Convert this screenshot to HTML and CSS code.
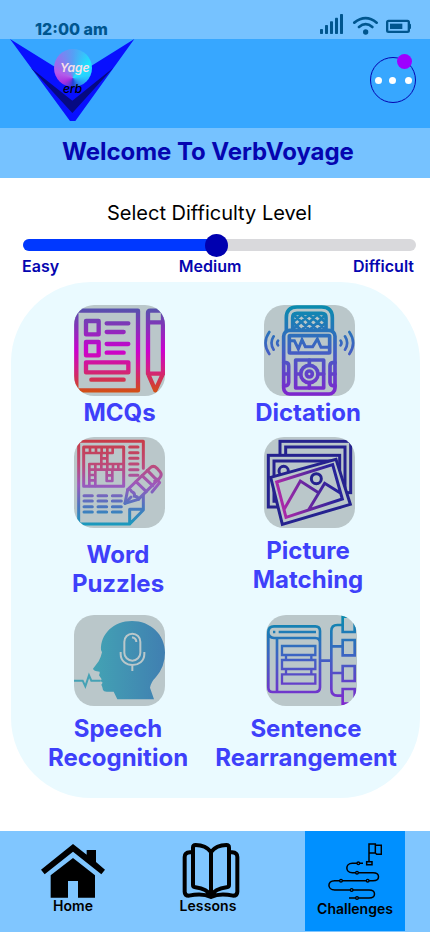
FILE: index.html
```html
<!DOCTYPE html>
<html lang="en">
<head>
<meta charset="utf-8">
<meta name="viewport" content="width=device-width, initial-scale=1">
<title>VerbVoyage</title>
<link rel="stylesheet" href="styles.css">
</head>
<body>
<div class="app">
  <div class="status">
    <span class="clock">12:00 am</span>
    <svg class="status-icons" width="92" height="22" viewBox="0 0 276 66">
      <g fill="#00568f">
        <rect x="0" y="45" width="9" height="15" rx="2"/><rect x="15" y="33" width="9" height="27" rx="2"/><rect x="30" y="22" width="9" height="38" rx="2"/><rect x="45" y="11" width="9" height="49" rx="2"/><rect x="60" y="0" width="9" height="60" rx="2"/>
        <circle cx="137" cy="54" r="8"/>
        <rect x="210" y="29" width="37" height="16"/>
        <path d="M265 29h5q3 0 3 3v10q0 3-3 3h-5z"/>
      </g>
      <g fill="none" stroke="#00568f" stroke-width="8" stroke-linecap="round">
        <path d="M103 26Q137-1 170 26M117 39Q137 22 157 39"/>
        <rect x="201.500" y="20.500" width="65" height="33" rx="4" stroke-width="7"/>
      </g>
    </svg>
  </div>
  <header class="header">
    <div class="logo">
      <svg width="125" height="83" viewBox="0 0 375 249">
        <path fill="#0810ff" d="M0 0L187 116L373 0L196 246H180Z"/>
        <path fill="#060a82" d="M62 86L187 185L310 86L187 222Z"/>
      </svg>
      <span class="orb"></span>
      <span class="logo-top">Yage</span>
      <span class="logo-bottom">erb</span>
    </div>
    <div class="more"><i></i><i></i><i></i><b></b></div>
  </header>
  <h1 class="welcome">Welcome To VerbVoyage</h1>

  <section class="level">
    <h2>Select Difficulty Level</h2>
    <div class="track"><div class="fill"></div><div class="knob"></div></div>
    <div class="labels"><span>Easy</span><span class="medium">Medium</span><span>Difficult</span></div>
  </section>

  <main class="panel">
    <div class="card">
      <svg class="tile" viewBox="0 0 273 273">
        <defs><linearGradient id="g1" gradientUnits="userSpaceOnUse" x1="0" y1="10" x2="0" y2="262"><stop offset="0" stop-color="#5552ac"/><stop offset=".25" stop-color="#8b2ebb"/><stop offset=".5" stop-color="#cb00cf"/><stop offset=".72" stop-color="#d41d87"/><stop offset=".88" stop-color="#d13746"/><stop offset="1" stop-color="#d35012"/></linearGradient></defs>
        <g fill="none" stroke="url(#g1)" stroke-width="13" stroke-linejoin="round" stroke-linecap="round">
          <path d="M7 17H192V256H7Z"/>
          <rect x="36" y="48" width="38" height="40"/><rect x="36" y="111" width="38" height="40"/>
          <path d="M98 55H163M98 81H149M98 117H163M98 143H149M52 224H149"/>
          <rect x="36" y="172" width="127" height="30"/>
          <path d="M229 17H260Q267 17 267 24V206L244 256L222 206V24Q222 17 229 17M222 52H267M222 206H267"/>
        </g>
      </svg>
      <h3 class="right">MCQs</h3>
    </div>
    <div class="card">
      <svg class="tile nudge1" viewBox="0 0 273 273">
        <defs><linearGradient id="g2" gradientUnits="userSpaceOnUse" x1="0" y1="0" x2="0" y2="273"><stop offset="0" stop-color="#088dae"/><stop offset=".5" stop-color="#4160c3"/><stop offset="1" stop-color="#8024cf"/></linearGradient></defs>
        <g fill="none" stroke="url(#g2)" stroke-width="11" stroke-linejoin="round" stroke-linecap="round">
          <path d="M67 76V38Q67 6 99 6H173Q205 6 205 38V76M86 74V38Q86 25 99 25H173Q186 25 186 38V74"/>
          <path stroke-width="8" d="M90 30L134 72M112 28L156 72M134 28L180 70M158 28L184 52M88 53L108 72M184 30L140 72M160 28L116 72M138 28L90 70M114 28L88 50M184 54L164 72"/>
          <rect x="59" y="76" width="154" height="191" rx="18"/>
          <rect x="76" y="92" width="121" height="52" rx="2"/>
          <path stroke-width="9" stroke-linejoin="miter" d="M80 107H91L103 132L114 104L124 125H146L160 102L171 127H193"/>
          <rect x="95" y="165" width="84" height="84"/>
          <circle cx="136" cy="207" r="26"/><circle cx="136" cy="207" r="9"/>
          <path d="M136 165V181M136 233V249M95 207H110M162 207H179M59 173H66Q74 174 74 183V232Q73 241 66 242H59M213 173H206Q198 174 198 183V232Q199 241 206 242H213M60 207H74M198 207H213"/>
          <path stroke-width="8" d="M42 107Q37 114 42 121M29 94Q16 114 29 134M16 81Q-7 114 16 147M230 107Q235 114 230 121M243 94Q256 114 243 134M256 81Q279 114 256 147"/>
        </g>
      </svg>
      <h3>Dictation</h3>
    </div>
    <div class="card">
      <svg class="tile" viewBox="0 0 273 273">
        <defs><linearGradient id="g3" gradientUnits="userSpaceOnUse" x1="0" y1="8" x2="0" y2="264"><stop offset="0" stop-color="#c93b46"/><stop offset=".3" stop-color="#bd4a79"/><stop offset=".53" stop-color="#9b59bd"/><stop offset=".78" stop-color="#4c75bf"/><stop offset="1" stop-color="#199bbd"/></linearGradient></defs>
        <g fill="none" stroke="url(#g3)" stroke-width="9" stroke-linejoin="round" stroke-linecap="round">
          <path d="M208 94V13H14V261H167L208 219V174M167 261V217H208"/>
          <rect x="29" y="30" width="120" height="118"/>
          <path stroke-width="8" d="M32 48H116V31M48 31V48M66 31V48M83 31V48M100 31V48M82 48V81M100 48V81M82 64H100M46 81H149M46 81V147M46 98H149M64 81V147M64 98V147M46 114H64M46 130H64M82 81V98M100 81V98M117 81V98M133 81V98M98 98V132H115V98M98 115H115"/>
          <path d="M167 30H192M167 47H192M167 64H192M167 81H192M167 98H192M167 115H192M30 176H55M30 192H55M30 209H55M30 225H55M72 176H98M72 192H98M72 209H98M72 225H98M115 176H142M115 192H142M115 209H142M115 225H142"/>
          <path fill="#bac7ca" d="M153 199L161 158L228 93Q238 83 249 94L258 104Q266 114 256 124L193 187Z"/>
          <path d="M161 158Q168 154 173 164Q184 168 181 178Q192 178 193 187M153 199L171 180M186 134L217 164M204 116L236 146M220 100L250 131M242 132L248 126L257 137L234 165"/>
        </g>
      </svg>
      <h3 class="low">Word<br>Puzzles</h3>
    </div>
    <div class="card">
      <svg class="tile nudge1" viewBox="0 0 273 273">
        <defs><linearGradient id="g4" gradientUnits="userSpaceOnUse" x1="35" y1="175" x2="205" y2="130"><stop offset="0" stop-color="#b22aa9"/><stop offset="1" stop-color="#28239a"/></linearGradient></defs>
        <g fill="#bac7ca" stroke="#25228f" stroke-width="9">
          <rect x="48" y="13" width="212" height="154"/><rect x="65" y="30" width="178" height="120"/>
          <rect x="13" y="55" width="214" height="155"/><path d="M30 193V72H210V193Z"/>
          <circle cx="59" cy="102" r="14"/>
          <path d="M20 121L216 67L259 202L55 262Z"/>
        </g>
        <g fill="none" stroke="url(#g4)" stroke-width="9">
          <path d="M38 135L206 83L235 186L66 241ZM58 221L109 132L166 169M134 218L182 139L229 168"/>
          <circle cx="157" cy="125" r="15" stroke="#25228f"/>
        </g>
      </svg>
      <h3 class="mid">Picture<br>Matching</h3>
    </div>
    <div class="card">
      <svg class="tile" viewBox="0 0 273 273">
        <defs><linearGradient id="g5" gradientUnits="userSpaceOnUse" x1="55" y1="0" x2="273" y2="0"><stop offset="0" stop-color="#43a3b4"/><stop offset="1" stop-color="#407fb1"/></linearGradient></defs>
        <path fill="url(#g5)" d="M240 253L228 218Q231 201 246 186Q273 154 273 113C273 58 229 18 174 18C118 18 79 58 81 105L84 112Q81 126 74 139L57 161Q58 168 77 170V175L75 181L83 193L79 197L86 203L82 209Q85 214 87 225Q89 230 98 230H119L130 253Z"/>
        <path fill="none" stroke="#45a2b5" stroke-width="6" d="M0 197H26L34 214L45 181L52 197H80"/>
        <g fill="none" stroke="#bac7ca" stroke-width="6">
          <rect x="151" y="56" width="48" height="81" rx="24"/><path d="M140 111V117C140 161 211 161 211 117V111M175 150V168M174 67Q187 70 187 81"/>
        </g>
      </svg>
      <h3 class="mid">Speech<br>Recognition</h3>
    </div>
    <div class="card">
      <svg class="tile nudge3" viewBox="0 0 273 273">
        <defs><linearGradient id="g6" gradientUnits="userSpaceOnUse" x1="0" y1="0" x2="0" y2="273"><stop offset="0" stop-color="#078cad"/><stop offset=".45" stop-color="#3d63c3"/><stop offset="1" stop-color="#8225d0"/></linearGradient></defs>
        <g fill="none" stroke="url(#g6)" stroke-width="8">
          <path d="M7 51V218Q7 231 20 231H148Q162 231 162 217V84Q162 69 148 69H24Q7 68 7 51Q7 34 24 34H148Q162 34 162 48V84M33 69V231"/>
          <path stroke-width="7" d="M21 51H28M38 51H150M48 93H148V120H48ZM48 135H148V162H48ZM48 178H148V206H48ZM60 120V135M136 120V135M60 162V178M136 162V178"/>
          <path d="M162 137H196M228 30H214Q196 30 196 48V223Q196 242 214 242H228M196 94H228M196 174H228M230 5H266V51H230ZM230 75H266V121H230ZM230 153H266V198H230ZM230 222H266V266H230Z"/>
        </g>
      </svg>
      <h3 class="mid left">Sentence<br>Rearrangement</h3>
    </div>
  </main>

  <nav class="nav">
    <a class="item home">
      <svg width="64" height="54" viewBox="0 0 192 162"><path d="M96 0L137 32V18H165V54L192 77L181 91L96 23L11 91L0 77ZM96 42L162 94V161H111V111H81V161H29V94Z"/></svg>
      <span>Home</span>
    </a>
    <a class="item lessons">
      <svg width="58" height="58" viewBox="0 0 174 174" fill="none" stroke="#000" stroke-width="12" stroke-linejoin="round" stroke-linecap="round"><path d="M87 27Q71 6 41 6Q33 6 33 14V126Q33 132 40 133Q76 138 87 158Q98 138 134 133Q141 132 141 126V14Q141 6 133 6Q103 6 87 27V158M31 28H24Q8 29 8 42V146Q8 158 21 158Q61 149 87 162Q113 149 153 158Q166 158 166 146V42Q166 29 150 28H143"/></svg>
      <span>Lessons</span>
    </a>
    <a class="item active">
      <svg width="54" height="57" viewBox="0 0 162 171" fill="none" stroke="#000" stroke-width="4.500"><path d="M123 54V3H142V30H123M142 7H160V34H146L142 30M116 56H132V65H116ZM105 61H73C51 61 51 89 73 89H135C157 89 157 113 135 113H20C-3 113-3 141 20 141H123C145 141 145 165 123 165H63"/><g fill="#0090ff" stroke-width="4"><circle cx="91" cy="61" r="4"/><circle cx="87" cy="89" r="4"/><circle cx="39" cy="113" r="4"/><circle cx="119" cy="113" r="4"/><circle cx="71" cy="141" r="4"/><circle cx="87" cy="165" r="4"/></g></svg>
      <span>Challenges</span>
    </a>
  </nav>
</div>
</body>
</html>
```
FILE: styles.css
```css
* { box-sizing: border-box; }
body { margin: 0; font-family: Inter, "Liberation Sans", sans-serif; background: #fff; }
h1, h2, h3 { margin: 0; }
svg { display: block; flex: none; }
.app { width: 430px; height: 932px; display: flex; flex-direction: column; overflow: hidden; }

.status { height: 39px; background: #76c2ff; display: flex; justify-content: space-between; padding: 0 18px 0 35px; }
.clock { margin-top: 20px; font-size: 16px; line-height: 19px; font-weight: 800; color: #00568f; }
.status-icons { margin-top: 14px; }

.header { height: 89px; background: #37a7ff; display: flex; justify-content: space-between; padding: 0 14px 0 10px; }
.logo { position: relative; width: 125px; height: 83px; }
.orb { position: absolute; left: 44px; top: 10px; width: 38px; height: 38px; border-radius: 50%; background: conic-gradient(from 0deg at 50% 76%, #55a0f5, #19e5ff 50deg, #29d0ff 80deg, #2a8cf0 130deg, #2440d8 180deg, #a62ee0 245deg, #b45bea 290deg, #8a78f0 325deg, #55a0f5); }
.logo-top, .logo-bottom { position: absolute; font-style: italic; line-height: 14px; }
.logo-top { left: 50px; top: 22px; font-size: 12px; font-weight: 600; color: #f8dfe8; }
.logo-bottom { left: 53px; top: 43px; font-size: 12px; font-weight: 500; color: #000; }
.more { position: relative; width: 46px; height: 46px; margin-top: 18px; border: 1px solid #0505b0; border-radius: 50%; display: flex; align-items: center; gap: 7px; padding-left: 4px; }
.more i { width: 7px; height: 7px; border-radius: 50%; background: #fff; }
.more i:nth-child(3) { margin-left: 2px; }
.more b { position: absolute; left: 26px; top: -4px; width: 15px; height: 15px; border-radius: 50%; background: #9e00ff; }

.welcome { height: 50px; background: #76c2ff; color: #0505b0; font-size: 24px; line-height: 48px; font-weight: 700; letter-spacing: -0.04px; padding-left: 62px; white-space: nowrap; }

.level { height: 104px; padding: 23px 14px 0 23px; }
.level h2 { font-size: 20px; line-height: 24px; font-weight: 400; color: #000; padding-left: 84px; white-space: nowrap; }
.track { position: relative; margin-top: 14px; height: 12px; border-radius: 6px; background: #d9d9dc; }
.fill { width: 50%; height: 12px; border-radius: 6px 0 0 6px; background: #0038ff; }
.knob { position: absolute; left: 182px; top: -5px; width: 23px; height: 23px; border-radius: 50%; background: #0000b0; }
.labels { display: flex; justify-content: space-between; margin: 6px 2px 0 -1px; font-size: 16px; line-height: 19px; font-weight: 600; color: #0505b0; }
.labels .medium { padding-left: 8px; }

.panel { width: 409px; height: 516px; margin-left: 11px; border-radius: 80px; background: #eafaff; display: grid; grid-template-columns: 190px 190px; grid-template-rows: 132px 178px 183px; padding: 23px 0 0 13px; }
.card { display: flex; flex-direction: column; align-items: center; }
.tile { width: 91px; height: 91px; border-radius: 20px; background: #bac7ca; overflow: hidden; }
.nudge1 { margin-left: 1px; }
.nudge3 { margin-left: 5px; }
.card h3 { margin-top: 2px; padding-right: 2px; font-size: 24px; line-height: 29px; font-weight: 700; color: #3e40fa; text-align: center; white-space: nowrap; }
.card .mid { margin-top: 8px; }
.card .low { margin-top: 12px; }
.card .right { padding: 0 0 0 1px; }
.card .left { padding-right: 6px; }

.nav { height: 101px; margin-top: 33px; background: #80c6ff; position: relative; display: flex; }
.item { display: flex; flex-direction: column; align-items: center; height: 100px; font-size: 14px; line-height: 17px; font-weight: 600; color: #000; }
.home { width: 64px; margin-left: 41px; padding-top: 13px; }
.home span { margin-top: -1px; }
.lessons { width: 60px; margin-left: 76px; padding-top: 12px; }
.lessons span { margin-top: -4px; padding-right: 6px; letter-spacing: 0.1px; }
.active { width: 100px; margin-left: 64px; padding-top: 12px; background: #0090ff; }
```
